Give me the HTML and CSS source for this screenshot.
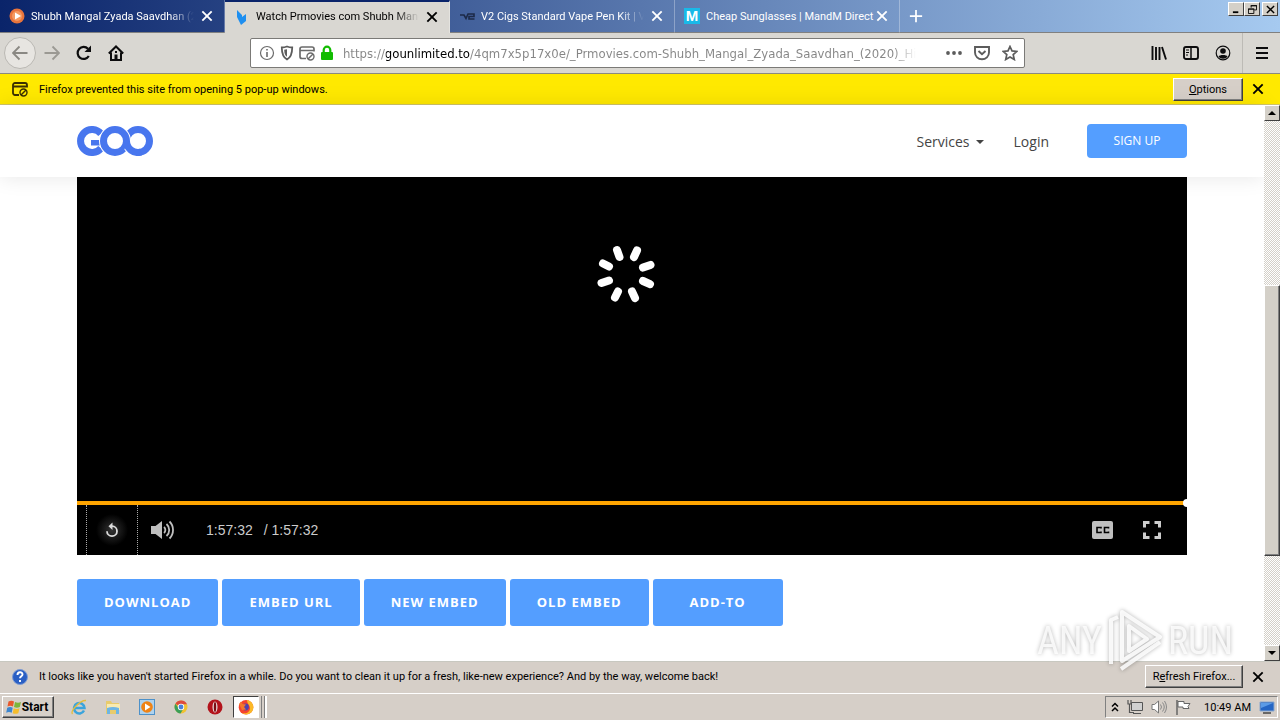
FILE: index.html
```html
<!DOCTYPE html>
<html lang="en">
<head>
<meta charset="UTF-8">
<title>Watch Prmovies com Shubh Mangal Zyada Saavdhan</title>
<link rel="stylesheet" href="styles.css">
</head>
<body>
    <div class="tab-bar">
        <div class="tab">
            <svg class="tab-icon" viewBox="0 0 16 16"><circle cx="8" cy="8" r="7.500" fill="#e8743c"/><circle cx="8" cy="8" r="5" fill="#f59a62"/><path d="M6 4.500l6 3.500-6 3.500z" fill="#fff"/></svg>
            <button class="tab-title fade">Shubh Mangal Zyada Saavdhan (2</button>
            <button class="close" aria-label="Close tab"><svg viewBox="0 0 12 12"><path d="M2 2l8 8M10 2l-8 8"/></svg></button>
        </div>
        <div class="tab active">
            <svg class="tab-icon" viewBox="0 0 16 16"><path d="M3 1l5 5 0 2 4-3 0 7-5 4-2-4-2-4z" fill="#1e8ff0"/></svg>
            <button class="tab-title fade">Watch Prmovies com Shubh Manga</button>
            <button class="close" aria-label="Close tab"><svg viewBox="0 0 12 12"><path d="M2 2l8 8M10 2l-8 8"/></svg></button>
        </div>
        <div class="tab">
            <svg class="tab-icon" viewBox="0 0 16 16"><path d="M1 7l4 0 2 3.500 2-4.500h6v2.500h-5v2.500h5.500" fill="none" stroke="#1c2a48" stroke-width="1.600"/></svg>
            <button class="tab-title fade">V2 Cigs Standard Vape Pen Kit | V2</button>
            <button class="close" aria-label="Close tab"><svg viewBox="0 0 12 12"><path d="M2 2l8 8M10 2l-8 8"/></svg></button>
        </div>
        <div class="tab">
            <span class="tab-icon m-icon">M</span>
            <button class="tab-title">Cheap Sunglasses | MandM Direct</button>
            <button class="close" aria-label="Close tab"><svg viewBox="0 0 12 12"><path d="M2 2l8 8M10 2l-8 8"/></svg></button>
        </div>
        <button class="new-tab" aria-label="New tab"><svg viewBox="0 0 16 16"><path d="M8 1v14M1 8h14" stroke="#fff" stroke-width="2"/></svg></button>
        <div class="window-btns">
            <button aria-label="Minimize"><svg viewBox="0 0 10 10"><path d="M1 8h6" stroke="#000" stroke-width="2"/></svg></button>
            <button aria-label="Restore"><svg viewBox="0 0 10 10"><path d="M3.500 3V.5h6v5H7M3 1h7M.5 4.500h6v5h-6zM0 4.500h7" fill="none" stroke="#000"/></svg></button>
            <button class="win-close" aria-label="Close"><svg viewBox="0 0 10 10"><path d="M1 1l8 8M9 1l-8 8" stroke="#000" stroke-width="1.600"/></svg></button>
        </div>
    </div>

    <div class="nav-bar">
        <div class="nav-group">
            <button class="nav-btn back" aria-label="Back"><svg viewBox="0 0 16 16"><path d="M15.500 8H1.500M7.500 1.500L1 8l6.500 6.500" fill="none" stroke="#8a8883" stroke-width="1.800"/></svg></button>
            <button class="nav-btn" aria-label="Forward"><svg viewBox="0 0 16 16"><path d="M.5 8h14M8.500 1.500L15 8l-6.500 6.500" fill="none" stroke="#9b9993" stroke-width="1.800"/></svg></button>
            <button class="nav-btn" aria-label="Reload"><svg viewBox="0 0 16 16"><path d="M12.800 11A6 6 0 1 1 12 3.800" fill="none" stroke="#0c0c0d" stroke-width="2.200"/><path d="M15 .5v6.500H8.500z" fill="#0c0c0d"/></svg></button>
            <button class="nav-btn" aria-label="Home"><svg viewBox="0 0 16 16"><path d="M.8 8.500L8 1.500l7.200 7M3 7.500V15h10V7.500" fill="none" stroke="#0c0c0d" stroke-width="2"/><path d="M6.500 14V9.500h3V14M7 6h2v2H7z" fill="#0c0c0d"/></svg></button>
        </div>
        <div class="spring"></div>
        <div class="url-bar">
            <svg viewBox="0 0 16 16"><circle cx="8" cy="8" r="6.500" fill="none" stroke="#6b6b6b" stroke-width="1.200"/><path d="M8 7v5M8 4v1.600" stroke="#6b6b6b" stroke-width="1.600"/></svg>
            <svg viewBox="0 0 16 16"><path d="M8 1.500c2 .8 3.500 1 5.200 1 0 5.500-.7 9.500-5.200 12-4.500-2.500-5.200-6.500-5.200-12 1.700 0 3.200-.2 5.200-1z" fill="none" stroke="#5c5c5c" stroke-width="1.800"/><path d="M8 4.200v7.600C6 10.500 5.300 8.500 5.200 4.800z" fill="#5c5c5c"/></svg>
            <svg viewBox="0 0 16 16"><path d="M7 13.500H3A2 2 0 0 1 1 11.500V4a2 2 0 0 1 2-2h10a2 2 0 0 1 2 2v2.500M1 5.500h14" fill="none" stroke="#6b6b6b" stroke-width="1.700"/><circle cx="11.500" cy="11.500" r="3.500" fill="none" stroke="#6b6b6b" stroke-width="1.400"/><path d="M9 14l5-5" stroke="#6b6b6b" stroke-width="1.400"/></svg>
            <svg viewBox="0 0 16 16"><path d="M4.700 8V5a3.300 3.300 0 0 1 6.600 0v3" fill="none" stroke="#12bc00" stroke-width="2.200"/><rect x="2" y="7" width="12" height="8" rx="1" fill="#12bc00"/></svg>
            <input class="url" type="text" aria-label="Address" value="https://gounlimited.to/4qm7x5p17x0e/_Prmovies.com-Shubh_Mangal_Zyada_Saavdhan_(2020)_Hi">
            <div class="url-actions">
                <button aria-label="Page actions"><svg viewBox="0 0 16 16"><g fill="#5c5c5c"><circle cx="2" cy="8" r="1.900"/><circle cx="8" cy="8" r="1.900"/><circle cx="14" cy="8" r="1.900"/></g></svg></button>
                <button aria-label="Save to Pocket"><svg viewBox="0 0 16 16"><path d="M1 2h14v5.500a7 6.800 0 0 1-14 0zM4.500 6L8 9.300 11.500 6" fill="none" stroke="#5c5c5c" stroke-width="1.900"/></svg></button>
                <button aria-label="Bookmark"><svg viewBox="0 0 16 16"><path d="M8 1.500l2 4.400 4.900.5-3.700 3.200 1.100 4.900L8 12l-4.300 2.500 1.100-4.900L1.100 6.400 6 5.900z" fill="none" stroke="#5c5c5c" stroke-width="1.700"/></svg></button>
            </div>
        </div>
        <div class="spring"></div>
        <div class="nav-group">
            <button class="nav-btn" aria-label="Library"><svg viewBox="0 0 16 16"><path d="M1.500 1v14M5 2v13M8.500 2v13M11 2l4 12.500" stroke="#0c0c0d" stroke-width="1.900"/></svg></button>
            <button class="nav-btn" aria-label="Sidebars"><svg viewBox="0 0 16 16"><rect x="1" y="2" width="14" height="12" rx="2" fill="none" stroke="#0c0c0d" stroke-width="1.900"/><path d="M8 2v12" stroke="#0c0c0d" stroke-width="1.500"/><path d="M3 5h3M3 7.500h3M3 10h2" stroke="#0c0c0d"/></svg></button>
            <button class="nav-btn" aria-label="Account"><svg viewBox="0 0 16 16"><circle cx="8" cy="8" r="6.800" fill="none" stroke="#0c0c0d" stroke-width="1.200"/><circle cx="8" cy="6" r="2.800" fill="#0c0c0d"/><path d="M3.500 11.500c1-2 8-2 9 0-2 3-7 3-9 0z" fill="#0c0c0d"/></svg></button>
            <button class="nav-btn menu" aria-label="Menu"><svg viewBox="0 0 16 16"><path d="M2 3h12M2 8h12M2 13h12" stroke="#0c0c0d" stroke-width="2"/></svg></button>
        </div>
    </div>

    <div class="notice popup-notice">
        <svg viewBox="0 0 16 16"><path d="M7 14H3a2 2 0 0 1-2-2V4a2 2 0 0 1 2-2h10a2 2 0 0 1 2 2v2.500M1 5.500h14" fill="none" stroke="#3a3000" stroke-width="1.800"/><circle cx="11.500" cy="11.500" r="3.500" fill="none" stroke="#3a3000" stroke-width="1.400"/><path d="M9 14l5-5" stroke="#3a3000" stroke-width="1.400"/></svg>
        <span class="notice-text">Firefox prevented this site from opening 5 pop-up windows.</span>
        <button class="classic-btn options"><span><u>O</u>ptions</span></button>
        <button class="close" aria-label="Close"><svg viewBox="0 0 12 12"><path d="M2 2l8 8M10 2l-8 8"/></svg></button>
    </div>

    <div class="viewport">
        <div class="page">
            <header class="site-header">
                <div class="container header-row">
                    <a class="logo" href="#" aria-label="Home">
                        <svg viewBox="0 0 76 30"><g fill="none" stroke="#4876ee" stroke-width="7"><path d="M24 7.800A11.500 11.500 0 1 0 24 22.200"/><circle cx="61" cy="15" r="11.500"/></g><path d="M14 14h9v5.500h-9z" fill="#4876ee"/><circle cx="38" cy="15" r="11.500" fill="none" stroke="#fff" stroke-width="9"/><circle cx="38" cy="15" r="11.500" fill="none" stroke="#4876ee" stroke-width="7"/><path d="M51.100 20.800A11.500 11.500 0 0 0 61 26.500" fill="none" stroke="#fff" stroke-width="9"/><path d="M49.500 15A11.500 11.500 0 0 0 64 26.100" fill="none" stroke="#4876ee" stroke-width="7"/></svg>
                    </a>
                    <nav class="site-nav">
                        <a class="dropdown" href="#">Services</a>
                        <a href="#">Login</a>
                        <a class="sign-up" href="#">SIGN UP</a>
                    </nav>
                </div>
            </header>
            <main class="container content">
                <div class="player">
                    <div class="screen">
                        <svg class="spinner" viewBox="-30 -30 60 60"><g stroke="#fff" stroke-width="8" stroke-linecap="round"><path d="M8-17l3-6.500M17-6.400l7.500-2.700M17 7l7 3.200M6 17.500l3 6.500M-8 17.500L-11 23.500M-17 6.500L-24.500 9M-17-7.500L-23-10.500M-6.500-17L-9-24"/></g></svg>
                    </div>
                    <input class="progress" type="range" min="0" max="100" value="100" aria-label="Progress">
                    <div class="controls">
                        <button class="replay" aria-label="Replay"><svg viewBox="0 0 16 16"><path d="M8 4.200a5 5 0 1 1-5 5" fill="none" stroke="#ddd" stroke-width="1.800"/><path d="M8.500.5v7.400L4.500 4.200z" fill="#ddd"/></svg></button>
                        <button class="volume" aria-label="Mute"><svg viewBox="0 0 24 20"><path d="M0 6h4.500L11 1v18l-6.500-5H0z" fill="#bfbfbf"/><path d="M13 7a4 4 0 0 1 0 6M15.500 4a8 8 0 0 1 0 12M18.500 1.500a12 12 0 0 1 0 17" fill="none" stroke="#bfbfbf" stroke-width="1.800"/></svg></button>
                        <span class="time">1:57:32</span>
                        <span class="duration">/ 1:57:32</span>
                        <button class="cc" aria-label="Captions"><svg viewBox="0 0 21 18"><rect width="21" height="18" rx="2" fill="#bfbfbf"/><path d="M9 7.500V6.500H5v5h4v-1M16.500 7.500V6.500h-4v5h4v-1" fill="none" stroke="#000" stroke-width="1.600"/></svg></button>
                        <button class="fullscreen" aria-label="Fullscreen"><svg viewBox="0 0 18 18"><path d="M1.500 6.500v-5h5M11.500 1.500h5v5M16.500 11.500v5h-5M6.500 16.500h-5v-5" fill="none" stroke="#ccc" stroke-width="3"/></svg></button>
                    </div>
                </div>
                <div class="actions">
                    <button>DOWNLOAD</button>
                    <button>EMBED URL</button>
                    <button>NEW EMBED</button>
                    <button>OLD EMBED</button>
                    <button>ADD-TO</button>
                </div>
            </main>
        </div>
        <div class="scrollbar">
            <button class="scroll-btn" aria-label="Scroll up"><svg viewBox="0 0 8 4"><path d="M0 4l4-4 4 4z"/></svg></button>
            <div class="track"><div class="thumb"></div></div>
            <button class="scroll-btn" aria-label="Scroll down"><svg viewBox="0 0 8 4"><path d="M0 0l4 4 4-4z"/></svg></button>
        </div>
    </div>

    <div class="notice refresh-notice">
        <svg viewBox="0 0 16 16"><circle cx="8" cy="8" r="7.500" fill="#2a5fc4" stroke="#7d9bd2"/><path d="M5.500 6c0-3.500 5-3.500 5-.5 0 1.800-2.500 1.800-2.500 3.800M8 11v2" fill="none" stroke="#fff" stroke-width="1.900"/></svg>
        <span class="notice-text">It looks like you haven't started Firefox in a while. Do you want to clean it up for a fresh, like-new experience? And by the way, welcome back!</span>
        <button class="classic-btn refresh"><span>R<u>e</u>fresh Firefox...</span></button>
        <button class="close" aria-label="Close"><svg viewBox="0 0 12 12"><path d="M2 2l8 8M10 2l-8 8"/></svg></button>
    </div>

    <div class="taskbar">
        <button class="start"><svg viewBox="0 0 16 16"><path d="M2.500 2.500q3-1.500 5.500 0L7 7.500q-2.500-1.500-5.500 0z" fill="#e9582b"/><path d="M9 3q3 1.500 6 0l-1.200 5q-3 1.300-5.800 0z" fill="#7db63a"/><path d="M1.200 8.700q3-1.500 5.500 0l-1 5q-2.700-1.500-5.500 0z" fill="#3c86cf"/><path d="M7.700 9.200q3 1.500 5.800 0l-1.200 5q-3 1.300-5.600 0z" fill="#f5bd2c"/></svg>Start</button>
        <div class="launchers">
            <button aria-label="Internet Explorer"><svg viewBox="0 0 16 16"><path d="M13 11.500A5.200 5.200 0 1 1 13.500 9H4" fill="none" stroke="#3ba4dc" stroke-width="2.500"/><path d="M1.500 15C-1 12 9 1 15 1.500" fill="none" stroke="#e5bd3a" stroke-width="1.300"/></svg></button>
            <button aria-label="Explorer"><svg viewBox="0 0 16 16"><path d="M1 2h5l1 2h7v11H1z" fill="#e8cb6c"/><path d="M2 5h13v6H2z" fill="#f8eab0"/><path d="M2 15V9q6-2 12 0v6h-3v-4H5v4z" fill="#6db5e4"/></svg></button>
            <button aria-label="Media Player"><svg viewBox="0 0 16 16"><rect x=".5" y=".5" width="15" height="15" fill="#aed2ee" stroke="#4d91c9"/><circle cx="8" cy="8" r="5.800" fill="#ef8316"/><path d="M6 4.500l5.500 3.500L6 11.500z" fill="#fff"/></svg></button>
            <button aria-label="Chrome"><svg viewBox="0 0 16 16"><circle cx="8" cy="8" r="6.500" fill="#f1c232"/><path d="M8 8L2.400 4.700A6.500 6.500 0 0 1 14 5.300H8z" fill="#dd4b3e"/><path d="M2.400 4.700A6.500 6.500 0 0 0 7.500 14.500L10.500 9.500 5.500 9z" fill="#3b9e58"/><circle cx="8" cy="8" r="3.200" fill="#fff"/><circle cx="8" cy="8" r="2.400" fill="#4a80d9"/></svg></button>
            <button aria-label="Opera"><svg viewBox="0 0 16 16"><circle cx="8" cy="8" r="7.500" fill="#b3131b"/><ellipse cx="8" cy="8" rx="2.500" ry="5.500" fill="#e9d9d9"/><ellipse cx="8" cy="8" rx="1.200" ry="5" fill="#7a0d12"/></svg></button>
            <button class="running" aria-label="Firefox"><svg viewBox="0 0 16 16"><circle cx="8" cy="8.300" r="7.300" fill="#f5432d"/><path d="M9 1c5 1 7 5 6.200 9C14 15 8 17 4 14c5 1 8-1 8-5 0-3-3-4-3-8z" fill="#fbb928"/><circle cx="7.500" cy="8" r="3.400" fill="#5141ad"/><path d="M1 5l2-2.500L4.500 5 8 5.500 6 8l2 2.500L4 11z" fill="#f4772b"/></svg></button>
        </div>
        <div class="tray">
            <svg class="chevrons" viewBox="0 0 8 10"><path d="M1 4.500L4 1.500l3 3M1 9l3-3 3 3" fill="none" stroke="#000" stroke-width="1.500"/></svg>
            <svg viewBox="0 0 16 16"><path d="M4.500 3.500h11v8h-11zM6 14.500h8" fill="#d0d0d0" stroke="#555"/><path d="M1 1v4h3V1M2.500 5v8.500H7" fill="none" stroke="#555" stroke-width="1.200"/></svg>
            <svg viewBox="0 0 16 16"><path d="M1 5.500h2.500L7.500 2v12l-4-3.500H1z" fill="#fff" stroke="#777"/><path d="M9.500 5.500q2 2.500 0 5M11.500 3.500q3.500 4.500 0 9M13.500 2q4 6 0 12" fill="none" stroke="#888"/></svg>
            <svg class="flag" viewBox="0 0 16 16"><path d="M2 1v15" stroke="#666" stroke-width="1.500"/><path d="M3 2.500h6v2h6l-2 3 1 2H8v-1.500H3z" fill="#fff" stroke="#666"/></svg>
            <span>10:49 AM</span>
            <svg viewBox="0 0 16 16"><path d="M1 3h14v9H1z" fill="#2566c4" stroke="#8aa7cc"/><path d="M2 4h12L2 9z" fill="#5b9be6"/><path d="M4 14h8" stroke="#444" stroke-width="1.500"/></svg>
        </div>
    </div>

    <div class="watermark">
        <span>ANY</span>
        <svg viewBox="0 0 56 64"><g fill="none" stroke="#fff" stroke-opacity=".85" stroke-width="4" stroke-linejoin="round"><path d="M11 8L4 11v44M15 3l38 25-38 24z"/><path d="M22 17v25l18-12zM14 60l39-27"/></g></svg>
        <span>RUN</span>
    </div>
</body>
</html>
```
FILE: styles.css
```css
* {
    box-sizing: border-box;
}
body {
    margin: 0;
    height: 100vh;
    display: flex;
    flex-direction: column;
    overflow: hidden;
    position: relative;
    background: #fff;
    color: #000;
    font-family: Roboto, "Liberation Sans", sans-serif;
    font-size: 11px;
}
button {
    border: none;
    background: none;
    padding: 0;
    font: inherit;
    color: inherit;
    display: flex;
    align-items: center;
    justify-content: center;
}
svg {
    width: 16px;
    height: 16px;
    flex: none;
    display: block;
}
a {
    color: inherit;
    text-decoration: none;
}

/* tabs */
.tab-bar {
    display: flex;
    height: 33px;
    flex: none;
    background: linear-gradient(to right, #0a246a, #a6caf0);
    border-bottom: 1px solid #808080;
}
.tab {
    display: flex;
    align-items: center;
    gap: 6px;
    flex: 0 1 225px;
    min-width: 0;
    height: 33px;
    padding: 0 10px 0 9px;
    color: #fff;
    border-right: 1px solid rgba(255, 255, 255, 0.3);
    border-bottom: 1px solid #808080;
}
.tab.active {
    background: #d9d7d2;
    color: #000;
    border-top: 2px solid #0a246a;
    border-bottom: none;
    padding-bottom: 2px;
}
.m-icon {
    width: 16px;
    height: 16px;
    background: #19b9e8;
    color: #fff;
    font: bold 15px/16px "Liberation Sans", sans-serif;
    text-align: center;
}
.tab-title {
    flex: 1;
    min-width: 0;
    justify-content: flex-start;
    white-space: nowrap;
}
.fade {
    -webkit-mask-image: linear-gradient(to right, #000 85%, transparent);
    mask-image: linear-gradient(to right, #000 85%, transparent);
}
.close svg {
    width: 14px;
    height: 14px;
    stroke: currentColor;
    stroke-width: 1.6;
}
.new-tab {
    width: 32px;
}
.new-tab svg {
    width: 14px;
    height: 14px;
}
.window-btns {
    display: flex;
    align-items: flex-start;
    margin-left: auto;
    padding: 2px 2px 0 0;
}
.window-btns button,
.scroll-btn {
    width: 16px;
    height: 14px;
    background: #d4d0c8;
    border: 1px solid;
    border-color: #fff #404040 #404040 #fff;
}
.window-btns svg {
    width: 9px;
    height: 9px;
}
.window-btns .win-close {
    margin-left: 2px;
}

/* toolbar */
.nav-bar {
    display: flex;
    align-items: center;
    flex: none;
    height: 40px;
    background: #d9d7d2;
}
.nav-group {
    display: flex;
    align-items: center;
    padding: 0 0 0 4px;
}
.nav-group:first-child {
    padding-right: 4px;
}
.nav-btn {
    width: 32px;
    height: 32px;
}
.back {
    background: #e7e5e1;
    border: 1px solid #bab8b3;
    border-radius: 50%;
}
.menu {
    width: 38px;
    height: 40px;
    margin-left: 3px;
    border-left: 1px solid #bdbbb6;
}
.spring {
    flex: 3;
}
.url-bar {
    flex: 20;
    min-width: 0;
    display: flex;
    align-items: center;
    gap: 4px;
    height: 30px;
    padding: 0 6px 0 8px;
    background: #fff;
    border: 1px solid #7b7a77;
    border-radius: 2px;
}
.url {
    flex: 1;
    min-width: 0;
    height: 26px;
    margin: 0 26px 0 4px;
    padding: 0;
    border: none;
    outline: none;
    font-family: "DejaVu Sans Condensed", "Noto Sans", sans-serif;
    font-size: 13px;
    color: transparent;
    /* domain in black, the rest grey, fading out at the end */
    background: linear-gradient(to right, #858585 43px, #000 43px, #000 127px, #858585 127px, #858585 96%, transparent);
    -webkit-background-clip: text;
    background-clip: text;
}
.url-actions {
    display: flex;
    gap: 12px;
}

/* notification bars */
.notice {
    display: flex;
    align-items: center;
    flex: none;
    height: 32px;
    padding: 0 15px 0 12px;
}
.notice-text {
    flex: 1;
    min-width: 0;
    margin-left: 11px;
    white-space: nowrap;
    overflow: hidden;
}
.popup-notice {
    background: #ffe900;
    border-top: 1px solid #8b8a80;
    border-bottom: 1px solid #cfc46a;
}
.refresh-notice {
    background: #d6cfc8;
    border-top: 1px solid #c8c8c0;
    padding-bottom: 2px;
}
.classic-btn {
    height: 23px;
    padding: 0 5px;
    margin-right: 8px;
    background: #d6cfc8;
    border: 1px solid;
    border-color: #fff #404040 #404040 #fff;
    box-shadow: inset -1px -1px #808080;
}
.options {
    min-width: 70px;
}
.refresh {
    min-width: 98px;
}

/* site */
.viewport {
    display: flex;
    flex: 1;
    min-height: 0;
}
.page {
    flex: 1;
    min-width: 0;
    display: flex;
    flex-direction: column;
    font-family: "Open Sans", sans-serif;
}
.container {
    width: 100%;
    max-width: 1140px;
    margin: 0 auto;
    padding: 0 15px;
}
.site-header {
    flex: none;
    background: #fff;
    box-shadow: 0 0 20px rgba(0, 0, 0, 0.1);
}
.header-row {
    display: flex;
    align-items: center;
    justify-content: space-between;
    height: 72px;
}
.logo svg {
    width: 76px;
    height: 30px;
}
.site-nav {
    display: flex;
    align-items: center;
    color: #444;
    font-size: 14px;
}
.site-nav a {
    margin-left: 30px;
}
.dropdown::after {
    content: "";
    display: inline-block;
    margin-left: 6px;
    vertical-align: 3px;
    border: 4px solid transparent;
    border-top-color: #444;
    border-bottom: none;
}
.site-nav .sign-up {
    margin-left: 38px;
    width: 100px;
    line-height: 34px;
    border-radius: 4px;
    background: #549eff;
    color: #fff;
    font-size: 12px;
    text-align: center;
}
.content {
    flex: 1;
    min-height: 0;
    display: flex;
    flex-direction: column;
    position: relative;
}
.player {
    flex: 1;
    display: flex;
    flex-direction: column;
    background: #000;
    overflow: hidden;
}
.screen {
    flex: 1;
    display: flex;
    justify-content: center;
    padding: 67px 12px 0 0;
}
.spinner {
    width: 60px;
    height: 60px;
}
.progress {
    appearance: none;
    -webkit-appearance: none;
    flex: none;
    width: calc(100% + 4px);
    height: 4px;
    margin: 0;
    background: #ffa500;
}
.progress::-webkit-slider-thumb {
    -webkit-appearance: none;
    width: 8px;
    height: 8px;
    border-radius: 50%;
    background: #fff;
}
.controls {
    display: flex;
    align-items: center;
    height: 50px;
    padding: 0 26px 0 9px;
    color: #ccc;
    font-family: "Liberation Sans", sans-serif;
    font-size: 14px;
}
.replay {
    width: 52px;
    height: 50px;
    border: 1px dotted #aaa;
    border-width: 0 1px;
    background: radial-gradient(circle, #333, #000 16px);
}
.volume {
    margin: 0 31px 0 13px;
}
.volume svg {
    width: 24px;
    height: 20px;
}
.duration {
    flex: 1;
    margin-left: 11px;
}
.cc svg {
    width: 21px;
    height: 18px;
}
.fullscreen {
    margin-left: 30px;
}
.fullscreen svg {
    width: 18px;
    height: 18px;
}
.actions {
    display: flex;
    gap: 4px;
    padding: 24px 0 35px;
}
.actions button {
    min-width: 130px;
    height: 47px;
    padding: 0 27px 2px;
    border-radius: 3px;
    background: #549eff;
    color: #fff;
    font-size: 13px;
    font-weight: bold;
    letter-spacing: 1px;
}

/* scrollbar */
.scrollbar {
    display: flex;
    flex-direction: column;
    width: 16px;
    background: repeating-conic-gradient(#fff 0 25%, #d4d0c8 0 50%) 0 0 / 2px 2px;
}
.scroll-btn {
    height: 16px;
}
.scroll-btn svg {
    width: 8px;
    height: 4px;
}
.track {
    flex: 1;
    display: grid;
    grid-template-rows: 164fr 271fr 89fr;
}
.thumb {
    grid-row: 2;
    background: #d4d0c8;
    border: 1px solid;
    border-color: #fff #404040 #404040 #fff;
    box-shadow: inset -1px -1px #808080;
}

/* taskbar */
.taskbar {
    display: flex;
    align-items: center;
    flex: none;
    height: 27px;
    padding: 0 2px;
    background: #d6cfc8;
    border-top: 1px solid #fff;
}
.start {
    min-width: 52px;
    height: 22px;
    padding: 0 2px 0 0;
    border: 1px solid;
    border-color: #fff #404040 #404040 #fff;
    box-shadow: inset -1px -1px #808080;
    font-size: 12px;
    font-weight: bold;
}
.launchers {
    display: flex;
    align-items: center;
    gap: 18px;
    margin-left: 17px;
}
.launchers .running {
    height: 22px;
    margin-left: -8px;
    padding: 0 4px;
    background: #fff;
    border: 1px solid;
    border-color: #404040 #fff #fff #404040;
    box-shadow: 2px 0 #d6cfc8, 3px 0 #808080, 5px 0 #d6cfc8, 6px 0 #808080, 8px 0 #fff;
}
.tray {
    display: flex;
    align-items: center;
    gap: 8px;
    height: 22px;
    margin-left: auto;
    padding: 0 2px 0 5px;
    border: 1px solid;
    border-color: #808080 #fff #fff #808080;
}
.chevrons {
    width: 8px;
    height: 10px;
}
.flag {
    margin-right: 5px;
}

.watermark {
    position: absolute;
    right: 47px;
    bottom: 47px;
    display: flex;
    align-items: center;
    gap: 5px;
    color: rgba(255, 255, 255, 0.8);
    font: 38px/64px "Roboto Condensed", "Liberation Sans Narrow", sans-serif;
    filter: drop-shadow(0 0 2px rgba(0, 0, 0, 0.35));
    pointer-events: none;
}
.watermark svg {
    width: 56px;
    height: 64px;
}
```
